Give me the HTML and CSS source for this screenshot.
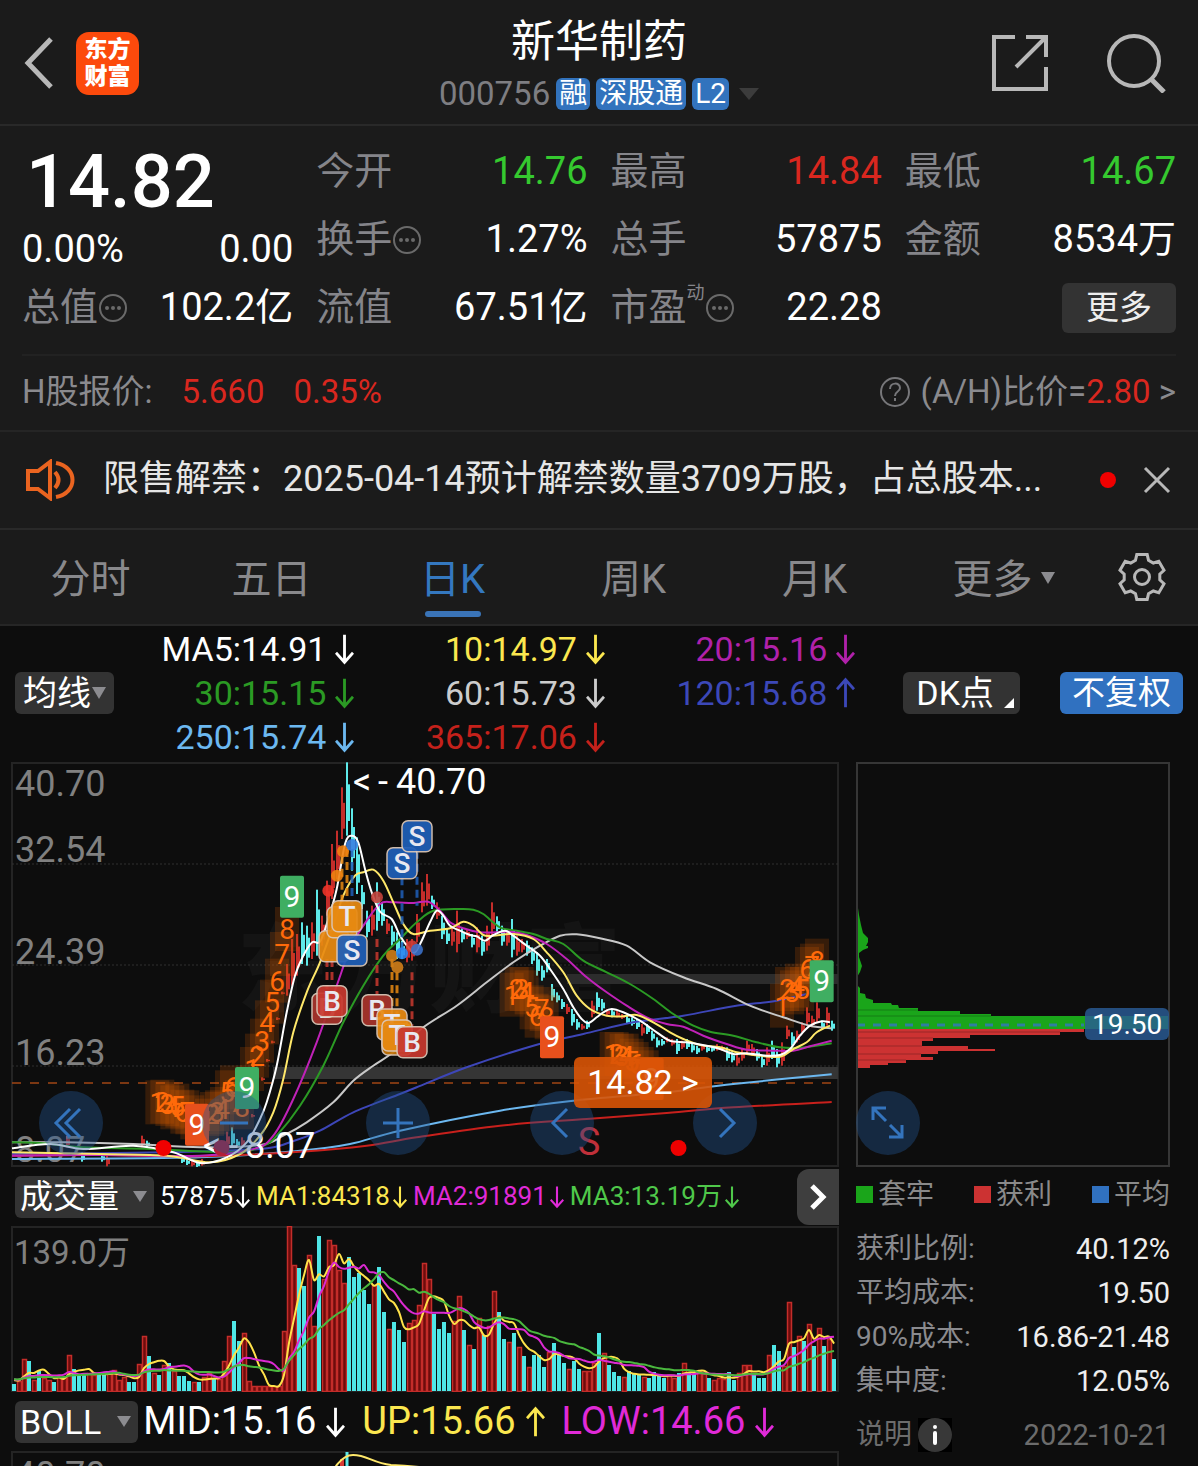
FILE: index.html
```html
<!DOCTYPE html>
<html lang="zh-CN">
<head>
    <meta charset="UTF-8">
    <meta name="viewport" content="width=device-width, initial-scale=1">
    <title>新华制药 000756</title>
    <link rel="stylesheet" href="styles.css">
</head>
<body>
    <svg class="defs" aria-hidden="true">
        <symbol id="down" viewBox="0 0 20 32"><path d="M10 1V30M1 20L10 30L19 20" /></symbol>
        <symbol id="up" viewBox="0 0 20 32"><path d="M10 31V2M1 12L10 2L19 12" /></symbol>
        <symbol id="dots" viewBox="0 0 30 30"><circle cx="15" cy="15" r="13" fill="none" stroke="currentColor" stroke-width="2" /><circle cx="9" cy="15" r="2" /><circle cx="15" cy="15" r="2" /><circle cx="21" cy="15" r="2" /></symbol>
    </svg>

    <header class="topbar">
        <div class="topbar-left">
            <button class="icon-button" aria-label="返回">
                <svg width="30" height="52" viewBox="0 0 30 52"><path d="M27 2L4 26L27 50" stroke-width="5" /></svg>
            </button>
            <div class="logo">东方<br>财富</div>
        </div>
        <div class="topbar-title">
            <h1>新华制药</h1>
            <div class="code-row">
                <span class="code">000756</span>
                <span class="tag">融</span>
                <span class="tag">深股通</span>
                <span class="tag">L2</span>
                <span class="caret caret-dark"></span>
            </div>
        </div>
        <div class="topbar-right">
            <button class="icon-button" aria-label="分享">
                <svg width="56" height="56" viewBox="0 0 56 56"><path d="M23 2H2V54H54V32M34 2H54V22M53 3L24 32" stroke-width="4" /></svg>
            </button>
            <button class="icon-button" aria-label="搜索">
                <svg width="60" height="60" viewBox="0 0 60 60"><circle cx="28" cy="28" r="25" stroke-width="4" /><path d="M45 46L58 59" stroke-width="5" /></svg>
            </button>
        </div>
    </header>

    <section class="quote">
        <div class="quote-col">
            <div class="price">14.82</div>
            <div class="quote-row change"><span>0.00%</span><span>0.00</span></div>
            <div class="quote-row"><span class="label">总值<svg class="dots"><use href="#dots" /></svg></span><span>102.2亿</span></div>
        </div>
        <div class="quote-col">
            <div class="quote-row"><span class="label">今开</span><span class="green">14.76</span></div>
            <div class="quote-row"><span class="label">换手<svg class="dots"><use href="#dots" /></svg></span><span>1.27%</span></div>
            <div class="quote-row"><span class="label">流值</span><span>67.51亿</span></div>
        </div>
        <div class="quote-col">
            <div class="quote-row"><span class="label">最高</span><span class="red">14.84</span></div>
            <div class="quote-row"><span class="label">总手</span><span>57875</span></div>
            <div class="quote-row"><span class="label">市盈<small>动</small><svg class="dots"><use href="#dots" /></svg></span><span>22.28</span></div>
        </div>
        <div class="quote-col">
            <div class="quote-row"><span class="label">最低</span><span class="green">14.67</span></div>
            <div class="quote-row"><span class="label">金额</span><span>8534万</span></div>
            <div class="quote-row quote-more"><button class="more-button">更多</button></div>
        </div>
    </section>

    <section class="h-share">
        <span>H股报价:</span>
        <span class="red">5.660</span>
        <span class="red">0.35%</span>
        <a class="ratio" href="#ratio">
            <svg width="32" height="32" viewBox="0 0 32 32"><circle cx="16" cy="16" r="14" /><path d="M11 13C11 6 21 6 21 12C21 16 16 15 16 20M16 22V25" /></svg>
            <span>(A/H)比价=<span class="red">2.80</span> &gt;</span>
        </a>
    </section>

    <section class="notice">
        <svg width="50" height="42" viewBox="0 0 50 42"><path d="M2 12H12L24 3V39L12 30H2ZM29 13Q36 21 29 29M30 4C52 8 52 34 30 38" /></svg>
        <p>限售解禁：2025-04-14预计解禁数量3709万股，占总股本...</p>
        <i class="red-dot"></i>
        <button class="icon-button" aria-label="关闭">
            <svg width="28" height="28" viewBox="0 0 28 28"><path d="M2 2L26 26M26 2L2 26" stroke-width="3" /></svg>
        </button>
    </section>

    <nav class="tabs">
        <button class="tab">分时</button>
        <button class="tab">五日</button>
        <button class="tab active">日K</button>
        <button class="tab">周K</button>
        <button class="tab">月K</button>
        <button class="tab tab-more">更多<span class="caret caret-small"></span></button>
        <button class="icon-button" aria-label="设置">
            <svg width="50" height="50" viewBox="-25 -25 50 50"><path d="M-6.5-16.8L-5.2-22.4H5.2L6.5-16.8L11.3-14L16.8-15.7L22-6.7L17.8-2.8V2.8L22 6.7L16.8 15.7L11.3 14L6.5 16.8L5.2 22.4H-5.2L-6.5 16.8L-11.3 14L-16.8 15.7L-22 6.7L-17.8 2.8V-2.8L-22-6.7L-16.8-15.7L-11.3-14Z" stroke-width="3" /><circle r="7.5" stroke-width="3" /></svg>
        </button>
    </nav>

    <main>
        <section class="ma-bar">
            <button class="chip-button">均线<span class="caret caret-small"></span></button>
            <div class="ma-grid">
                <span class="c-white">MA5:14.91<svg class="arrow"><use href="#down" /></svg></span>
                <span class="c-yellow">10:14.97<svg class="arrow"><use href="#down" /></svg></span>
                <span class="c-purple">20:15.16<svg class="arrow"><use href="#down" /></svg></span>
                <span class="c-green">30:15.15<svg class="arrow"><use href="#down" /></svg></span>
                <span class="c-grey">60:15.73<svg class="arrow"><use href="#down" /></svg></span>
                <span class="c-blue">120:15.68<svg class="arrow"><use href="#up" /></svg></span>
                <span class="c-sky">250:15.74<svg class="arrow"><use href="#down" /></svg></span>
                <span class="c-red">365:17.06<svg class="arrow"><use href="#down" /></svg></span>
            </div>
            <button class="chip-button dk">DK点<span class="corner"></span></button>
            <button class="chip-button adjust">不复权</button>
        </section>

        <div class="panels">
            <div class="panel-left">
                <div class="k-chart">
                    <svg id="kline" viewBox="0 0 828 405"></svg>
                    <button class="round b1" aria-label="最左"><svg viewBox="0 0 64 64"><path d="M41 18L27 32L41 46M31 18L17 32L31 46" /></svg></button>
                    <button class="round b2" aria-label="缩小"><svg viewBox="0 0 64 64"><path d="M18 32H46" /></svg></button>
                    <button class="round b3" aria-label="放大"><svg viewBox="0 0 64 64"><path d="M17 32H47M32 17V47" /></svg></button>
                    <button class="round b4" aria-label="左移"><svg viewBox="0 0 64 64"><path d="M37 18L23 32L37 46" /></svg></button>
                    <button class="round b5" aria-label="右移"><svg viewBox="0 0 64 64"><path d="M27 18L41 32L27 46" /></svg></button>
                    <button class="price-button">14.82 &gt;</button>
                </div>

                <div class="sub-bar volume-bar">
                    <button class="chip-button">成交量<span class="caret"></span></button>
                    <span class="c-white">57875<svg class="arrow"><use href="#down" /></svg></span>
                    <span class="c-yellow">MA1:84318<svg class="arrow"><use href="#down" /></svg></span>
                    <span class="c-magenta">MA2:91891<svg class="arrow"><use href="#down" /></svg></span>
                    <span class="c-lime">MA3:13.19万<svg class="arrow"><use href="#down" /></svg></span>
                    <button class="next-button" aria-label="下一个"><svg width="18" height="30" viewBox="0 0 18 30"><path d="M3 4L14 15L3 26" /></svg></button>
                </div>
                <svg id="volume" viewBox="0 0 828 166"></svg>

                <div class="sub-bar boll-bar">
                    <button class="chip-button">BOLL<span class="caret"></span></button>
                    <span class="c-white">MID:15.16<svg class="arrow"><use href="#down" /></svg></span>
                    <span class="c-yellow">UP:15.66<svg class="arrow"><use href="#up" /></svg></span>
                    <span class="c-magenta">LOW:14.66<svg class="arrow"><use href="#down" /></svg></span>
                </div>
                <svg id="boll" viewBox="0 0 828 166">
                    <rect class="frame" x="1" y="1" width="826" height="164" />
                    <text class="axis" x="4" y="36">40.70</text>
                    <path d="M331 8V60" stroke="#d83a34" stroke-width="4" />
                    <path d="M336 1V60" stroke="#5eeaea" stroke-width="3" />
                    <path d="M300 60C318 30 325 4 342 4C356 4 362 12 380 14C480 18 620 60 820 90" fill="none" stroke="#ffe86a" stroke-width="2" />
                </svg>
            </div>

            <aside class="panel-right">
                <div class="k-chart">
                    <svg id="chips" viewBox="0 0 314 405">
                        <path fill="#1aa51a" d="M1 118L1 139L3 153L5 163L7 171L12 176V180L10 184H12V186L7 188L3 191V195L6 204L4 210L1 215V223L4 226V231L9 232L10 236L17 238V241H35L36 243H42L43 246H62V249H104V252H135V254H313V267H1Z" />
                        <path fill="#cc3232" d="M1 267H228V270H204V273H114V276H77V279H66V284H112V287H139V289H82V292H65V295H77V298H50V301H32V303H14V306H1Z" />
                        <path stroke="#0d0d0d" stroke-opacity=".25" d="M1 248H62M1 254H135M1 270H204M1 276H77M1 284H66M1 292H65M1 298H50" />
                        <path stroke="#2f7fa0" stroke-width="3" stroke-dasharray="8 8" d="M1 263H228" />
                        <rect class="frame light" x="1" y="1" width="312" height="403" />
                        <rect x="229" y="246" width="84" height="32" rx="6" fill="#2a5c96" fill-opacity=".82" />
                        <text x="236" y="272" class="avg-label">19.50</text>
                    </svg>
                    <button class="round b6" aria-label="全屏"><svg viewBox="0 0 64 64"><path d="M17 29V17H30M18 18L30 30M46 34V46H33M45 45L34 34" /></svg></button>
                </div>
                <div class="legend">
                    <span><i class="sq sq-green"></i>套牢</span>
                    <span><i class="sq sq-red"></i>获利</span>
                    <span><i class="sq sq-blue"></i>平均</span>
                </div>
                <dl class="stats">
                    <div><dt>获利比例:</dt><dd>40.12%</dd></div>
                    <div><dt>平均成本:</dt><dd>19.50</dd></div>
                    <div><dt>90%成本:</dt><dd>16.86-21.48</dd></div>
                    <div><dt>集中度:</dt><dd>12.05%</dd></div>
                </dl>
                <div class="explain">
                    <span>说明</span>
                    <svg width="34" height="34" viewBox="0 0 34 34"><rect width="34" height="34" fill="#000" /><circle cx="17" cy="17" r="17" fill="#383838" /><circle cx="17" cy="9" r="2" fill="#fff" /><rect x="15" y="13" width="4" height="14" rx="2" fill="#fff" /></svg>
                    <time>2022-10-21</time>
                </div>
            </aside>
        </div>
    </main>
    <script src="charts.js"></script>
</body>
</html>
```
FILE: styles.css
```css
* {
    box-sizing: border-box;
}

html, body {
    height: 100%;
}

body {
    margin: 0;
    overflow: hidden;
    background-color: #1b1b1b;
    color: #fff;
    font-family: Roboto, "Noto Sans CJK SC", sans-serif;
    line-height: 1.2;
}

button {
    padding: 0;
    border: none;
    background: none;
    color: inherit;
    font-family: inherit;
    line-height: inherit;
    cursor: pointer;
}

svg {
    display: block;
}

h1, p, dl, dd {
    margin: 0;
}

.defs {
    position: absolute;
    width: 0;
    height: 0;
}

/* colours */
.red { color: #d9271f; }
.green { color: #35c92f; }
.c-white { color: #fff; }
.c-yellow { color: #fbe74f; }
.c-purple { color: #b021aa; }
.c-green { color: #2b9a24; }
.c-grey { color: #ccc; }
.c-blue { color: #3c48b8; }
.c-sky { color: #6cb8f0; }
.c-red { color: #c4211b; }
.c-magenta { color: #e02ad8; }
.c-lime { color: #4fc84a; }

/* top bar */
.topbar {
    display: grid;
    grid-template-columns: 1fr auto 1fr;
    padding: 16px 24px 14px;
    border-bottom: 2px solid #292929;
}

.topbar-left, .topbar-right {
    display: flex;
    align-items: center;
    gap: 22px;
}

.topbar-right {
    justify-content: flex-end;
    gap: 58px;
    padding-right: 8px;
}

.icon-button {
    display: flex;
    align-items: center;
    justify-content: center;
}

.icon-button svg {
    fill: none;
    stroke: #b8b8b8;
}

.logo {
    width: 63px;
    height: 63px;
    padding-top: 4px;
    border-radius: 13px;
    background-color: #fc4a0c;
    font-size: 23px;
    font-weight: 900;
    line-height: 27px;
    text-align: center;
}

.topbar-title {
    display: flex;
    flex-direction: column;
    align-items: center;
    gap: 10px;
}

.topbar-title h1 {
    font-size: 44px;
    font-weight: 400;
    line-height: 52px;
}

.code-row {
    display: flex;
    align-items: center;
    gap: 6px;
    height: 32px;
}

.code {
    color: #7e7e82;
    font-size: 33px;
}

.tag {
    padding: 0 3px;
    border-radius: 6px;
    background-color: #3273bd;
    font-size: 28px;
    line-height: 32px;
}

.caret {
    border: 7px solid transparent;
    border-top: 11px solid #8c8c90;
    border-bottom: none;
}

.caret-dark {
    margin-left: 4px;
    border-width: 12px 10px 0;
    border-top-color: #3c3c3c;
}

.caret-small {
    border-width: 12px 7px 0;
}

/* quote */
.quote {
    display: grid;
    grid-template-columns: repeat(4, 1fr);
    gap: 23px;
    margin: 0 22px;
    padding: 12px 0;
    border-bottom: 2px solid #222;
    font-size: 38px;
}

.price {
    padding-left: 4px;
    font-size: 74px;
    font-weight: 500;
    line-height: 88px;
}

.quote-row {
    display: flex;
    align-items: center;
    justify-content: space-between;
    height: 68px;
}

.change {
    height: 48px;
}

.label {
    display: flex;
    align-items: center;
    color: #85858a;
}

.label small {
    align-self: flex-start;
    font-size: 18px;
    line-height: 16px;
}

.dots {
    width: 30px;
    height: 30px;
    fill: #6a6a6a;
    color: #6a6a6a;
}

.quote-more {
    justify-content: flex-end;
}

.more-button {
    width: 114px;
    height: 50px;
    border-radius: 6px;
    background-color: #333;
    color: #eee;
    font-size: 33px;
}

/* H share line */
.h-share {
    display: flex;
    align-items: center;
    gap: 29px;
    height: 76px;
    padding: 0 22px 2px;
    border-bottom: 2px solid #252525;
    color: #8a8a8e;
    font-size: 33px;
}

.ratio {
    display: flex;
    align-items: center;
    gap: 10px;
    margin-left: auto;
    color: #8a8a8e;
    text-decoration: none;
}

.ratio svg {
    fill: none;
    stroke: #77777a;
    stroke-width: 2;
}

/* notice */
.notice {
    display: flex;
    align-items: center;
    height: 98px;
    padding: 0 27px 0 26px;
    border-bottom: 2px solid #292929;
    color: #e6e6e6;
    font-size: 36px;
}

.notice > svg {
    flex: none;
    fill: none;
    stroke: #ea6420;
    stroke-width: 4;
}

.notice p {
    flex: 1;
    margin-left: 27px;
    overflow: hidden;
    white-space: nowrap;
}

.red-dot {
    width: 16px;
    height: 16px;
    margin-right: 27px;
    border-radius: 50%;
    background-color: #f00000;
}

/* tabs */
.tabs {
    display: grid;
    grid-template-columns: repeat(6, 1fr) 112px;
    height: 96px;
    border-bottom: 2px solid #262626;
}

.tab {
    display: flex;
    flex-direction: column;
    align-items: center;
    padding-top: 21px;
    color: #89898c;
    font-size: 40px;
    line-height: 58px;
}

.tab.active {
    color: #3478c0;
}

.tab.active::after {
    content: "";
    width: 56px;
    height: 6px;
    margin-top: 2px;
    border-radius: 3px;
    background-color: #3a74b8;
}

.tab-more {
    flex-direction: row;
    align-items: flex-start;
    justify-content: center;
    gap: 8px;
    padding-left: 16px;
}

.tab-more .caret {
    margin-top: 21px;
}

/* chart area */
main {
    background-color: #0d0d0d;
}

.ma-bar {
    display: flex;
    align-items: center;
    height: 136px;
    padding: 0 15px 3px;
}

.chip-button {
    display: flex;
    align-items: center;
    justify-content: center;
    flex: none;
    gap: 1px;
    height: 42px;
    padding: 0 8px;
    border-radius: 6px;
    background-color: #333;
    font-size: 34px;
    line-height: 40px;
}

.ma-grid {
    display: grid;
    flex: 1;
    grid-template-columns: 240fr 250fr 250fr;
    font-size: 34px;
    line-height: 44px;
}

.ma-grid span {
    display: flex;
    align-items: center;
    justify-content: flex-end;
    gap: 9px;
}

.arrow {
    flex: none;
    width: 19px;
    height: 32px;
    fill: none;
    stroke: currentColor;
    stroke-width: 3;
}

.dk {
    gap: 10px;
    margin-left: 48px;
    padding: 0 6px 0 13px;
}

.corner {
    align-self: flex-end;
    margin-bottom: 6px;
    border: 5px solid #fff;
    border-top-color: transparent;
    border-left-color: transparent;
}

.adjust {
    margin-left: 40px;
    padding: 0 12px;
    background-color: #3071c0;
    font-size: 33px;
}

.panels {
    display: grid;
    grid-template-columns: 828fr 314fr;
    gap: 17px;
    padding: 0 28px 0 11px;
}

.k-chart {
    position: relative;
}

.frame {
    fill: none;
    stroke: #242424;
    stroke-width: 2;
}

.frame.light {
    stroke: #363636;
}

.axis {
    fill: #808080;
    font-size: 36px;
}

.axis-small {
    fill: #808080;
    font-size: 33px;
}

.round {
    position: absolute;
    bottom: 3%;
    width: 64px;
    height: 64px;
    border-radius: 50%;
    background-color: rgba(36, 84, 146, 0.4);
}

.round svg {
    fill: none;
    stroke: #3474bd;
    stroke-width: 3;
}

.b1 { left: 3.4%; }
.b2 { left: 23.1%; }
.b3 { left: 42.9%; }
.b4 { left: 62.7%; }
.b5 { left: 82.4%; }
.b6 { left: 0; }

.price-button {
    position: absolute;
    left: 68%;
    bottom: 14.5%;
    width: 138px;
    height: 51px;
    border-radius: 6px;
    background-color: rgba(217, 84, 6, 0.9);
    font-size: 34px;
}

.sub-bar {
    display: flex;
    align-items: center;
    height: 59px;
    padding-left: 4px;
    white-space: nowrap;
}

.sub-bar > span {
    display: flex;
    align-items: center;
}

.sub-bar .chip-button {
    gap: 14px;
    padding: 0 7px 0 5px;
}

.volume-bar {
    gap: 6px;
    font-size: 26px;
}

.volume-bar .chip-button {
    font-size: 33px;
}

.volume-bar > span {
    gap: 3px;
}

.volume-bar .arrow {
    width: 14px;
}

.next-button {
    display: flex;
    align-items: center;
    justify-content: center;
    width: 42px;
    height: 56px;
    margin-left: auto;
    border-radius: 12px 0 0 12px;
    background-color: #3e3e3e;
}

.next-button svg {
    fill: none;
    stroke: #fff;
    stroke-width: 5;
}

.boll-bar {
    gap: 17px;
    font-size: 38px;
}

.boll-bar .chip-button + span {
    margin-left: -12px;
}

.boll-bar > span {
    gap: 10px;
}

.boll-bar .chip-button {
    gap: 16px;
}

/* chip distribution */
.avg-label {
    fill: #fff;
    font-size: 28px;
}

.legend {
    display: flex;
    justify-content: space-between;
    color: #8a8a8a;
    font-size: 28px;
    line-height: 55px;
}

.legend span {
    display: flex;
    align-items: center;
    gap: 5px;
}

.sq {
    width: 17px;
    height: 17px;
}

.sq-green { background-color: #1aa51a; }
.sq-red { background-color: #cc3232; }
.sq-blue { background-color: #3071c0; }

.stats {
    padding-top: 5px;
    font-size: 28px;
    line-height: 44px;
}

.stats div {
    display: flex;
    justify-content: space-between;
}

.stats dt {
    color: #8a8a8e;
}

.stats dd {
    color: #eee;
    font-size: 29px;
}

.explain {
    display: flex;
    align-items: center;
    gap: 6px;
    margin-top: 12px;
    color: #6c6c6c;
    font-size: 28px;
    line-height: 40px;
}

.explain time {
    margin-left: auto;
    font-size: 29px;
}

/* marks drawn by charts.js */
.watermark {
    fill: #141414;
    font-size: 96px;
    font-weight: 900;
}

.peak {
    fill: #fff;
    font-size: 36px;
}

.td {
    fill: #ff6a0a;
    font-size: 28px;
    text-anchor: middle;
}

.nine {
    fill: #fff;
    font-size: 30px;
    text-anchor: middle;
}

.mark {
    fill: #e8e8f0;
    font-size: 28px;
    font-weight: 500;
    text-anchor: middle;
}

.signal {
    fill: #c0303a;
    font-size: 38px;
    text-anchor: middle;
}
```
FILE: charts.js
```js
const RED = '#c42d2a';
const CYAN = '#5eeaea';

function rect(x, y, w, h, fill, extra) {
    return `<rect x="${x}" y="${y}" width="${w}" height="${h}" fill="${fill}" ${extra || ''}/>`;
}

function text(cls, x, y, str) {
    return `<text class="${cls}" x="${x}" y="${y}">${str}</text>`;
}

// smooth line through the points (Catmull-Rom)
function curve(points, color, width) {
    let d = `M${points[0][0]} ${points[0][1]}`;
    for (let i = 0; i < points.length - 1; i++) {
        const p0 = points[i - 1] || points[i];
        const p1 = points[i];
        const p2 = points[i + 1];
        const p3 = points[i + 2] || p2;
        d += `C${(p1[0] + (p2[0] - p0[0]) / 6).toFixed(1)} ${(p1[1] + (p2[1] - p0[1]) / 6).toFixed(1)} ` +
            `${(p2[0] - (p3[0] - p1[0]) / 6).toFixed(1)} ${(p2[1] - (p3[1] - p1[1]) / 6).toFixed(1)} ${p2[0]} ${p2[1]}`;
    }
    return `<path d="${d}" fill="none" stroke="${color}" stroke-width="${width}"/>`;
}

// ---- K line ----
// samples are stored at three units per chart unit
const sx = v => v / 3 - 11;
const sy = v => v / 3 - 3;

// high, low, direction, starting from bar 55
const candles = [
    '615 710 r', '540 680 r', '525 650 r', '490 615 c', '500 620 c', '490 600 r', '392 590 c', '470 560 r', '365 470 r', '255 420 r',
    '215 360 r', '85 240 r', '10 230 c', '148 335 c', '235 405 c', '378 450 c', '455 535 c', '440 530 r', '370 515 c', '430 500 c',
    '480 525 r', '500 560 c', '520 600 c', '545 600 c', '540 610 r', '540 605 r', '465 550 r', '370 460 r', '345 440 r', '410 450 c',
    '430 480 r', '470 540 c', '510 555 c', '500 560 r', '455 580 r', '505 550 c', '510 540 r', '525 565 c', '505 580 r', '530 590 c',
    '500 575 r', '430 530 r', '472 520 c', '500 560 c', '515 560 r', '480 595 c', '530 590 r', '540 580 r', '545 590 c', '565 615 c',
    '580 650 c', '620 665 c', '600 640 c', '675 725 c', '700 730 c', '720 750 c', '735 765 r', '750 800 c', '780 812 c', '795 812 r',
    '785 810 c', '725 775 r', '700 755 c', '720 755 c', '750 770 r', '750 775 c', '755 775 r', '765 780 r', '770 795 c', '775 800 c',
    '780 810 c', '795 830 r', '795 825 c', '815 845 c', '835 865 c', '840 860 c', '835 850 r', '840 860 r', '840 885 c', '845 870 r',
    '840 870 c', '850 880 c', '860 885 c', '855 875 r', '860 880 c', '862 878 c', '855 875 r', '860 875 r', '865 905 c', '880 910 c',
    '885 920 r', '870 905 r', '845 885 r', '855 890 r', '870 905 c', '890 925 c', '865 920 r', '845 900 c', '870 925 c', '850 920 r',
    '800 840 r', '820 860 c', '815 850 r', '790 820 r', '745 800 r', '770 805 r', '730 790 r', '785 810 c', '745 800 r', '785 815 c'
];

// flat stretch and the limit-up days before it
const early = [
    [11, 1130, 1165, 'r'], [14, 1180, 1208, 'c'], [19, 1190, 1222, 'r'], [18, 1185, 1208, 'c'], [26, 1130, 1165, 'r'], [27, 1145, 1165, 'c'],
    [34, 1195, 1212, 'c'], [35, 1200, 1218, 'c'], [36, 1205, 1222, 'r'], [37, 1208, 1225, 'c'], [38, 1200, 1220, 'r'],
    [43, 1118, 1165, 'r'], [44, 1105, 1165, 'c'], [45, 1140, 1165, 'c'], [46, 1135, 1165, 'r'], [48, 1065, 1075, 'r'],
    [50, 955, 965, 'r'], [51, 900, 908, 'r'], [52, 845, 853, 'r'], [53, 775, 783, 'r'], [54, 698, 706, 'r']
];

const lines = [
    ['#3d46b8', 2, '36,1185 500,1180 780,1170 870,1150 960,1115 1060,1060 1200,1005 1250,985 1400,925 1600,860 1750,825 1900,790 2050,770 2200,742 2330,725 2420,705'],
    ['#6cb8f0', 2, '36,1200 600,1195 900,1175 1050,1155 1200,1115 1500,1055 1720,1025 2000,1000 2200,975 2495,946'],
    ['#c8201c', 2, '36,1190 300,1188 600,1192 900,1178 1100,1160 1250,1135 1500,1100 1760,1080 2000,1062 2200,1045 2495,1029'],
    ['#c8c8c8', 2, '36,1150 200,1150 400,1155 600,1165 780,1158 850,1130 920,1090 1000,1030 1060,965 1120,920 1180,880 1270,805 1370,740 1460,670 1540,610 1620,560 1680,530 1730,526 1800,538 1880,560 1950,610 2050,655 2150,690 2250,740 2350,775 2430,800 2495,808'],
    ['#2b9a24', 2, '36,1150 120,1152 250,1165 450,1170 700,1180 790,1160 830,1130 900,1040 970,920 1030,790 1090,680 1150,590 1200,540 1250,490 1300,455 1380,450 1420,452 1450,465 1500,505 1550,515 1600,525 1640,540 1690,555 1750,605 1820,640 1890,675 1960,720 2020,765 2080,800 2130,818 2200,830 2270,850 2340,865 2400,866 2495,853'],
    ['#c022b8', 2, '36,1190 300,1188 600,1190 760,1170 820,1130 880,1020 950,850 1010,680 1050,570 1090,500 1140,435 1180,430 1240,432 1285,428 1320,455 1350,490 1390,508 1440,520 1490,520 1530,518 1580,528 1640,555 1700,600 1760,655 1820,700 1880,740 1940,775 2000,795 2050,803 2110,830 2180,855 2240,872 2320,875 2380,875 2430,862 2495,845'],
    ['#ffe86a', 2, '36,1180 300,1185 500,1190 630,1210 720,1185 780,1130 820,1060 850,960 880,820 920,700 960,610 1000,500 1030,410 1065,350 1090,340 1120,332 1150,365 1180,430 1210,495 1240,525 1290,515 1350,508 1390,488 1420,500 1450,528 1480,530 1540,525 1600,540 1640,580 1690,640 1730,710 1770,750 1820,770 1870,772 1910,768 1960,790 2010,820 2050,840 2100,858 2160,865 2210,880 2260,888 2340,893 2380,870 2420,850 2450,820 2490,800'],
    ['#ffffff', 2, '36,1168 150,1155 250,1170 400,1160 520,1180 600,1212 680,1195 740,1150 780,1080 800,1030 830,920 860,760 885,650 910,590 937,550 960,548 985,480 1010,390 1035,255 1055,230 1075,250 1095,330 1115,400 1140,458 1175,480 1200,530 1225,565 1245,580 1265,545 1290,490 1310,455 1330,470 1350,500 1380,515 1410,528 1430,532 1455,545 1480,528 1515,515 1540,530 1580,560 1620,590 1650,630 1690,690 1720,745 1745,780 1765,792 1790,775 1810,760 1835,750 1870,760 1920,785 1970,820 2010,845 2060,850 2120,860 2160,870 2200,885 2240,883 2300,890 2340,888 2370,870 2400,830 2430,800 2465,787 2490,790']
];

// nine-turn counts: y of digits 1..8 from a start x, then the 9
const counts = [
    { x: 472, ys: [1030, 1028, 1035, 1045, 1040, 1058, 1060, 1075], nine: [591, 1097, '#e8501c'] },
    { x: 621, ys: [1085, 1065, 1060, 1050, 1000, 985, 1030, 1045], nine: [741, 987, '#3fae62'] },
    { x: 756, ys: [930, 890, 845, 790, 728, 665, 585, 510], nine: [876, 413, '#3fae62'] },
    { x: 1535, ys: [707, 690, 690, 700, 745, 770, 750, 775], nine: [1656, 835, '#e8501c'] },
    { x: 1835, ys: [885, 885, 890, 890, 905, 915, 930, 940], nine: [1955, 960, '#e8501c'] },
    { x: 2346, ys: [740, 690, 700, 680, 690, 630, 620, 605], nine: [2465, 667, '#3fae62'] }
];

const BLUE_MARK = '#1f5fb8';
const RED_MARK = '#c8392f';
const ORANGE_MARK = '#e88a12';

function drawKline() {
    let s = rect(1, 1, 826, 403, 'none', 'class="frame"');
    s += text('watermark', 226, 242, '东方财富');
    s += rect(262, 305, 565, 12, '#353535') + rect(556, 212, 271, 10, '#2c2c2c');
    [102, 203, 304].forEach(y => {
        s += `<path d="M1 ${y}H827" stroke="#303030" stroke-dasharray="2 2"/>`;
    });
    s += '<path d="M1 321H827" stroke="#a04514" stroke-width="1.5" stroke-dasharray="9 9"/>';

    const bar = (i, hi, lo, dir) => {
        const x = 1 + 5 * i;
        const color = dir === 'r' ? RED : CYAN;
        const h = (lo - hi) / 3;
        s += rect(x - 1, sy(hi), 2, h, color) + rect(x - 1, sy(hi) + h * 0.3, 4, h * 0.5, color);
    };
    early.forEach(c => bar(...c));
    candles.forEach((c, k) => {
        const [hi, lo, dir] = c.split(' ');
        bar(55 + k, +hi, +lo, dir);
    });

    [['40.70', 34], ['32.54', 100], ['24.39', 202], ['16.23', 303], ['8.07', 400]].forEach(([v, y]) => {
        s += text('axis', 4, y, v);
    });

    counts.forEach(c => {
        c.ys.forEach((y, k) => {
            s += rect(sx(c.x + 15 * k) - 12, sy(y) - 22, 24, 44, '#d85a00', 'fill-opacity=".2"');
        });
    });

    lines.forEach(([color, width, pts]) => {
        s += curve(pts.split(' ').map(p => {
            const [x, y] = p.split(',');
            return [+sx(x).toFixed(1), +sy(y).toFixed(1)];
        }), color, width);
    });

    counts.forEach(c => {
        c.ys.forEach((y, k) => {
            s += text('td', sx(c.x + 15 * k), sy(y) + 10, k + 1);
        });
    });
    counts.forEach(c => {
        const [x, y, color] = c.nine;
        s += rect(sx(x) - 12, sy(y) - 21, 24, 42, color, 'rx="2"') + text('nine', sx(x), sy(y) + 10, 9);
    });

    // dashed links between a trade dot and its mark
    [[981, 600, 690, RED_MARK], [996, 600, 680, RED_MARK], [1131, 540, 705, RED_MARK], [1236, 640, 800, RED_MARK],
        [1041, 270, 430, ORANGE_MARK], [1026, 290, 430, ORANGE_MARK], [1176, 600, 750, ORANGE_MARK], [1191, 640, 780, ORANGE_MARK],
        [1056, 270, 540, BLUE_MARK], [1206, 355, 580, BLUE_MARK], [1251, 275, 440, BLUE_MARK]].forEach(([x, y1, y2, color]) => {
        s += `<path d="M${sx(x)} ${sy(y1)}V${sy(y2)}" stroke="${color}" stroke-width="3" stroke-dasharray="8 5" opacity=".85"/>`;
    });
    [[1029, 277, '#ef8210'], [1011, 350, '#ef8210'], [1056, 258, '#3b80e0'], [985, 395, '#ee3328'], [1131, 415, '#c5443c'], [1176, 590, '#cf7d18'],
        [1192, 625, '#cf7d18'], [1206, 583, '#2c86f0'], [1236, 562, '#d03c34'], [1251, 572, '#3b70c8']].forEach(([x, y, color]) => {
        s += `<circle cx="${sx(x)}" cy="${sy(y)}" r="6" fill="${color}" opacity=".9"/>`;
    });

    [['', 1002, 560, ORANGE_MARK], ['', 1026, 488, ORANGE_MARK], ['T', 1041, 470, ORANGE_MARK], ['S', 1056, 573, BLUE_MARK],
        ['B', 981, 748, '#a8342c'], ['B', 996, 725, RED_MARK], ['B', 1131, 752, '#a8342c'], ['T', 1176, 795, ORANGE_MARK],
        ['', 1191, 840, '#c47408'], ['T', 1191, 828, ORANGE_MARK], ['B', 1236, 848, RED_MARK],
        ['S', 1206, 311, BLUE_MARK], ['S', 1251, 230, BLUE_MARK]].forEach(([ch, x, y, color]) => {
        s += rect(sx(x) - 15, sy(y) - 15, 30, 31, color, 'rx="6" stroke="#dcc8b8" stroke-width="1.5" opacity=".93"');
        if (ch) {
            s += text('mark', sx(x), sy(y) + 10, ch);
        }
    });

    s += '<text class="peak" y="32"><tspan x="342">&lt;</tspan><tspan x="367">-</tspan><tspan x="385">40.70</tspan></text>';
    s += '<text class="peak" y="396"><tspan x="192">&lt;</tspan><tspan x="217">-</tspan><tspan x="234">8.07</tspan></text>';
    s += text('signal', 578, 393, 'S');
    [[152.5, '#f00000'], [210.5, '#b02038'], [667.5, '#f00000']].forEach(([x, color]) => {
        s += `<circle cx="${x}" cy="386" r="8" fill="${color}"/>`;
    });
    document.getElementById('kline').innerHTML = s;
}

// ---- volume ----
const volumes = ('c7 r10 r32 c30 r11 c20 r13 r11 c9 r14 r14 r36 c22 c17 c17 r18 r16 c17 c16 r18 r21 r11 r14 c9 c9 r27 r55 c35 r18 c16 ' +
    'r26 c28 r20 c15 c15 c10 r9 c9 r14 r18 c12 r12 r30 r55 c70 c50 r58 r10 r5 r5 r5 r5 r5 r5 r60 r165 r126 c123 c105 r136 ' +
    'r65 c155 r112 r151 r146 r121 r108 c134 c114 c118 c101 c87 r106 c124 c79 r62 c69 c61 c49 r68 r71 r86 r128 r112 c77 c62 c69 c58 r70 r95 ' +
    'c61 r46 c42 r73 c56 r65 r100 c79 c52 r49 c58 r44 c35 r24 c36 c36 c24 r39 c48 c36 c28 r22 c30 c22 r20 r20 r28 c58 r38 c26 ' +
    'c19 c15 r14 c20 c18 c16 r14 c13 c19 c15 c13 r16 r13 c18 r28 c18 c17 r20 r18 c13 r11 r13 r12 c19 c11 r18 r26 r26 c16 c13 ' +
    'c13 r36 c46 c40 r25 r89 c44 r55 c50 r67 c45 r63 c45 r52 c32').split(' ');

function average(values, n) {
    return values.map((v, i) => {
        let sum = 0;
        for (let k = i - n + 1; k <= i; k++) {
            sum += k < 0 ? 12 : values[k];
        }
        return [3 + 5 * i, +(165 - sum / n).toFixed(1)];
    });
}

function drawVolume() {
    const values = volumes.map(v => +v.slice(1));
    let s = rect(1, 1, 826, 164, 'none', 'class="frame"');
    s += text('axis-small', 3, 38, '139.0万');
    volumes.forEach((v, i) => {
        const h = values[i];
        if (v[0] === 'r') {
            s += rect(1.5 + 5 * i, 165.5 - h, 4, h, '#6e0c0c', `stroke="${RED}" stroke-width="1.5"`);
        } else {
            s += rect(1 + 5 * i, 165 - h, 4, h, '#4fe6e6');
        }
    });
    s += curve(average(values, 5), '#ffe24a', 2);
    s += curve(average(values, 10), '#dc2ad2', 2);
    s += curve(average(values, 20), '#4ab83e', 2);
    document.getElementById('volume').innerHTML = s;
}

drawKline();
drawVolume();
```
